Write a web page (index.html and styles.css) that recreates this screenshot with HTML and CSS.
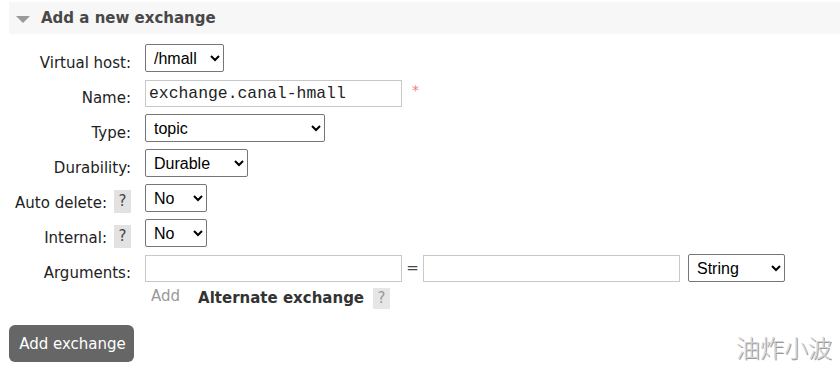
FILE: index.html
```html
<!DOCTYPE html>
<html lang="en">
<head>
    <meta charset="UTF-8">
    <title>Add a new exchange</title>
    <link rel="stylesheet" href="styles.css">
</head>
<body>
    <div class="section">
        <h2 class="section-title"><span class="arrow"></span>Add a new exchange</h2>
        <form class="exchange-form">
            <div class="row">
                <label class="lbl">Virtual host:</label>
                <select class="sel w-vhost"><option>/hmall</option></select>
            </div>
            <div class="row">
                <label class="lbl">Name:</label>
                <input class="txt mono" type="text" value="exchange.canal-hmall">
                <span class="req">*</span>
            </div>
            <div class="row">
                <label class="lbl">Type:</label>
                <select class="sel w-type"><option>topic</option></select>
            </div>
            <div class="row">
                <label class="lbl">Durability:</label>
                <select class="sel w-dur"><option>Durable</option></select>
            </div>
            <div class="row">
                <label class="lbl">Auto delete:<span class="help">?</span></label>
                <select class="sel w-no"><option>No</option></select>
            </div>
            <div class="row">
                <label class="lbl">Internal:<span class="help">?</span></label>
                <select class="sel w-no"><option>No</option></select>
            </div>
            <div class="row">
                <label class="lbl">Arguments:</label>
                <input class="txt" type="text">
                <span class="eq">=</span>
                <input class="txt" type="text">
                <select class="sel w-str"><option>String</option></select>
            </div>
            <div class="row extra">
                <span class="add-link">Add</span>
                <span class="alt">Alternate exchange</span>
                <span class="help light">?</span>
            </div>
            <button type="button" class="submit">Add exchange</button>
        </form>
    </div>
    <div class="watermark">油炸小波</div>
</body>
</html>
```

FILE: styles.css
```css
body {
    margin: 0;
    padding: 2px 0 0 9px;
    font-family: "DejaVu Sans", Verdana, sans-serif;
    font-size: 15px;
    color: #333;
    background: #fff;
    height: 370px;
    overflow: hidden;
}
.section-title {
    display: flex;
    align-items: center;
    height: 32px;
    margin: 0;
    padding-left: 7px;
    background-color: #f7f7f7;
    font-size: 15px;
    font-weight: bold;
    color: #484848;
}
.arrow {
    width: 0;
    height: 0;
    border-left: 7px solid transparent;
    border-right: 7px solid transparent;
    border-top: 7px solid #9a9a9a;
    margin: 2px 11px 0 0;
}
.exchange-form {
    padding-top: 10px;
}
.row {
    display: flex;
    align-items: center;
    height: 28px;
    margin-bottom: 7px;
}
.lbl {
    width: 122px;
    display: flex;
    justify-content: flex-end;
    align-items: center;
    padding-top: 9px;
    margin-right: 14px;
    color: #222;
    white-space: nowrap;
}
.help {
    display: inline-block;
    width: 17px;
    height: 23px;
    line-height: 23px;
    margin-left: 7px;
    margin-top: -3px;
    text-align: center;
    background-color: #e2e2e2;
    color: #444;
    font-size: 15px;
}
.sel {
    height: 28px;
    font-family: "Liberation Sans", Arial, sans-serif;
    font-size: 16px;
    color: #000;
    background: #fff;
    border: 1px solid #767676;
    border-radius: 2px;
    padding: 0 4px;
}
.w-vhost { width: 79px; }
.w-type { width: 180px; }
.w-dur { width: 103px; }
.w-no { width: 62px; }
.w-str { width: 97px; margin-left: 8px; }
.txt {
    box-sizing: border-box;
    width: 257px;
    height: 27px;
    border: 1px solid #c8c8c8;
    padding: 0 3px;
    font-size: 15px;
    margin: 0;
}
.mono {
    font-family: "Liberation Mono", "Courier New", monospace;
    font-size: 16.4px;
    color: #222;
}
.req {
    color: #f08080;
    margin: -6px 0 0 10px;
    font-size: 14px;
}
.eq {
    width: 21px;
    text-align: center;
    color: #444;
}
.extra {
    padding-left: 142px;
    height: 22px;
    margin-top: -2px;
    margin-bottom: 15px;
}
.add-link {
    color: #999;
    margin-right: 18px;
    margin-top: -4px;
}
.alt {
    font-weight: bold;
    color: #333;
    margin-right: 3px;
}
.help.light {
    color: #999;
    background-color: #e6e6e6;
    height: 21px;
    line-height: 21px;
    margin: 0 0 0 6px;
}
.submit {
    width: 125px;
    height: 37px;
    margin-top: 1px;
    background-color: #666;
    color: #fff;
    border: none;
    border-radius: 6px;
    font-family: "DejaVu Sans", Verdana, sans-serif;
    font-size: 15px;
    padding: 0 0 0 2px;
}
.watermark {
    position: absolute;
    right: 8px;
    bottom: 8px;
    font-family: "Noto Sans CJK SC", sans-serif;
    font-size: 24px;
    font-weight: 300;
    color: #d4d4d4;
    text-shadow: 1px 1px 0 #999;
}
```
